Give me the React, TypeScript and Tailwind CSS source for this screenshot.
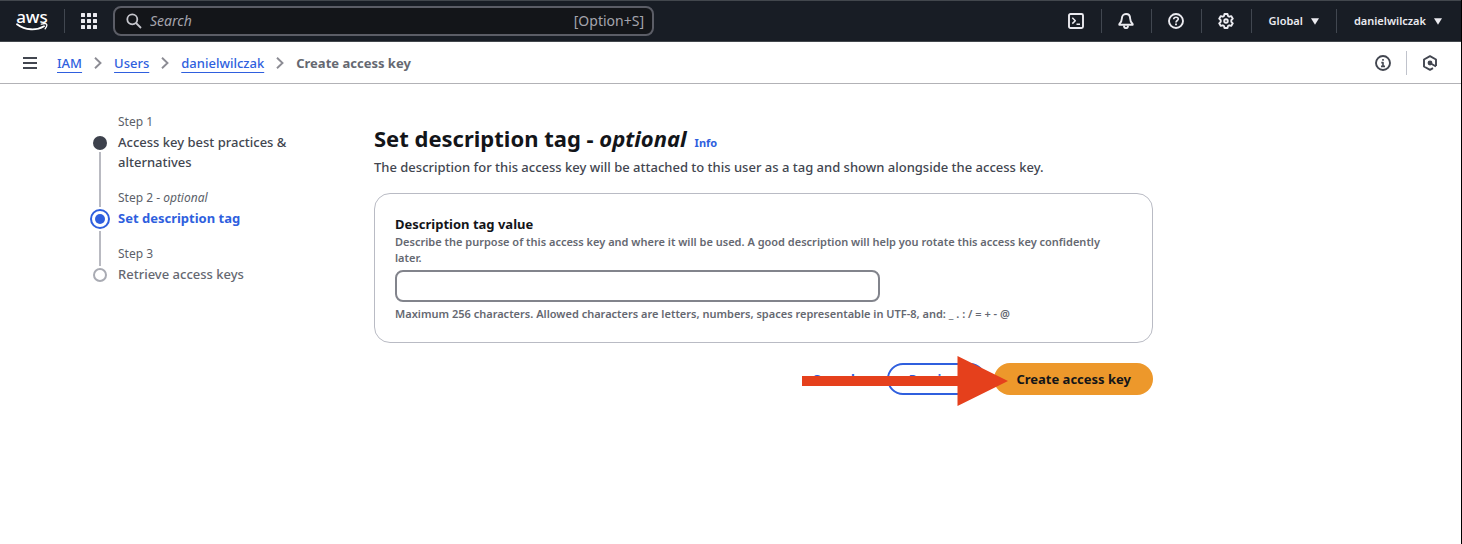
import type { ReactNode } from "react";

function AwsLogo() {
  return (
    <a href="#home" aria-label="AWS home" className="flex h-5 w-8 flex-col items-center text-white">
      <span className="h-3 text-[17px] leading-3 font-medium">aws</span>
      <svg viewBox="0 0 32 8" className="h-2 w-8 shrink-0" fill="none" stroke="currentColor" aria-hidden="true">
        <path d="M1 1.2C9.5 7.6 20.500 7.700 28 3.200" strokeWidth="1.900" strokeLinecap="round" />
        <path d="M25.300 1.200C27.500 .5 29.900 .5 30.500 1.100C31 1.700 30.500 4 29.100 5.800" strokeWidth="1.300" strokeLinecap="round" />
      </svg>
    </a>
  );
}

function AppsIcon() {
  return (
    <svg viewBox="0 0 16 16" className="size-4" fill="currentColor" aria-hidden="true">
      {[0, 6, 12].map((y) =>
        [0, 6, 12].map((x) => <rect key={`${x}-${y}`} x={x} y={y} width="4" height="4" rx=".5" />)
      )}
    </svg>
  );
}

function Icon({ children }: { children: ReactNode }) {
  return (
    <svg
      viewBox="0 0 16 16"
      className="size-4"
      fill="none"
      stroke="currentColor"
      strokeWidth="1.900"
      strokeLinejoin="round"
      aria-hidden="true"
    >
      {children}
    </svg>
  );
}

function TerminalIcon() {
  return (
    <Icon>
      <rect x="1" y="1" width="14" height="14" rx="1.500" />
      <path d="M4.300 4.800 7.300 7.700 4.300 10.600M8.500 11.300H12" strokeWidth="1.500" />
    </Icon>
  );
}

function BellIcon() {
  return (
    <Icon>
      <path d="M8 1C5.300 1 3.900 3 3.900 5.300C3.900 8.300 3 9.400 1.300 11.200V11.800H14.700V11.200C13 9.400 12.100 8.300 12.100 5.300C12.100 3 10.700 1 8 1Z" />
      <path d="M6 12.500C6 14.200 6.800 15.100 8 15.100S10 14.200 10 12.500" />
    </Icon>
  );
}

function HelpIcon() {
  return (
    <Icon>
      <circle cx="8" cy="8" r="7" />
      <path d="M5.700 6.300C5.700 4.900 6.700 4.200 8 4.200S10.300 5 10.300 6.100C10.300 7.500 8 7.600 8 9.500" strokeWidth="1.600" />
      <path d="M8 10.600V12.300" />
    </Icon>
  );
}

function GearIcon() {
  return (
    <Icon>
      <path d="M6.500 1H9.500L10 3L11.200 3.700L13.200 3.100L14.800 5.700L13.300 7.200V8.800L14.800 10.300L13.200 12.900L11.200 12.300L10 13L9.500 15H6.500L6 13L4.800 12.300L2.800 12.900L1.200 10.300L2.700 8.800V7.200L1.200 5.700L2.800 3.100L4.800 3.700L6 3Z" />
      <circle cx="8" cy="8" r="1.800" />
    </Icon>
  );
}

function InfoIcon() {
  return (
    <Icon>
      <circle cx="8" cy="8" r="7" />
      <path d="M8 4V5.700M6.300 7.600H8V11.300M6 11.400H10" strokeWidth="1.600" />
    </Icon>
  );
}

function HexIcon() {
  return (
    <Icon>
      <path d="M14 11V4.500L8 1.200L2 4.500V11.500L8 14.800L11 13.100" />
      <circle cx="8" cy="8" r="2.400" fill="currentColor" stroke="none" />
      <path d="M8 8L14 11.500" />
    </Icon>
  );
}

function Caret() {
  return (
    <svg viewBox="0 0 8 7" className="h-[7px] w-2" fill="currentColor" aria-hidden="true">
      <path d="M0 .3H8L4 6.700Z" />
    </svg>
  );
}

function Divider() {
  return <span className="h-6 w-px bg-[#414750]" />;
}

function TopBar() {
  const tools = [
    { label: "CloudShell", icon: <TerminalIcon /> },
    { label: "Notifications", icon: <BellIcon /> },
    { label: "Help", icon: <HelpIcon /> },
    { label: "Settings", icon: <GearIcon /> },
  ];
  return (
    <header className="flex h-[42px] items-center justify-between border-y border-[#42474d] bg-[#181d25] px-4 text-[#ebebf0]">
      <div className="flex items-center gap-4">
        <AwsLogo />
        <Divider />
        <button type="button" aria-label="Services">
          <AppsIcon />
        </button>
        <label className="flex h-[30px] w-[541px] items-center gap-2 rounded-lg border-2 border-[#5b5d66] bg-[#131519] pr-2 pl-[11px] text-[#a4a4ad]">
          <svg viewBox="0 0 16 16" className="size-4 text-[#c6c6cd]" fill="none" stroke="currentColor" strokeWidth="1.800" aria-hidden="true">
            <circle cx="6.300" cy="6.300" r="5" />
            <path d="M10 10L15 15" />
          </svg>
          <input
            type="search"
            aria-label="Search"
            placeholder="Search"
            className="min-w-0 flex-1 bg-transparent text-sm outline-none placeholder:text-[#a4a4ad] placeholder:italic"
          />
          <span className="text-sm">[Option+S]</span>
        </label>
      </div>
      <div className="flex items-center">
        {tools.map((t) => (
          <div key={t.label} className="flex items-center">
            <button type="button" aria-label={t.label} className="pr-[17px] pl-4">
              {t.icon}
            </button>
            <Divider />
          </div>
        ))}
        <button type="button" className="flex items-center gap-2 px-[17px] text-[11px] leading-4 font-semibold">
          Global <Caret />
        </button>
        <Divider />
        <button type="button" className="flex items-center gap-2 pr-[3px] pl-[17px] text-[11px] leading-4 font-semibold">
          danielwilczak <Caret />
        </button>
      </div>
    </header>
  );
}

function Chevron() {
  return (
    <svg viewBox="0 0 8 12" className="h-3 w-2 text-[#8c8c94]" fill="none" stroke="currentColor" strokeWidth="1.900" aria-hidden="true">
      <path d="M1 .8L6.500 6L1 11.200" />
    </svg>
  );
}

function BreadcrumbBar() {
  return (
    <div className="flex h-[42px] items-center justify-between border-b border-[#b2b2b6] px-[23px] text-[#424650]">
      <div className="flex items-center gap-5">
        <button type="button" aria-label="Open navigation">
          <svg viewBox="0 0 14 12" className="h-3 w-3.5" stroke="currentColor" strokeWidth="2" aria-hidden="true">
            <path d="M0 1H14M0 6H14M0 11H14" />
          </svg>
        </button>
        <nav aria-label="Breadcrumbs">
          <ol className="flex items-center gap-3 text-[13px] leading-5">
            {["IAM", "Users", "danielwilczak"].map((name) => (
              <li key={name} className="flex items-center gap-3">
                <a
                  href={`#${name}`}
                  className="font-medium text-[#2f5fde] underline decoration-1 underline-offset-4"
                >
                  {name}
                </a>
                <Chevron />
              </li>
            ))}
            <li className="font-bold text-[#656871]">Create access key</li>
          </ol>
        </nav>
      </div>
      <div className="flex items-center gap-[15px]">
        <button type="button" aria-label="Info panel">
          <InfoIcon />
        </button>
        <span className="h-6 w-px bg-[#c0c3cc]" />
        <button type="button" aria-label="Diagnostics">
          <HexIcon />
        </button>
      </div>
    </div>
  );
}

function Steps() {
  return (
    <nav aria-label="Steps" className="w-56 shrink-0">
      <ol className="text-[13px] leading-5 text-[#424650]">
        <li className="flex gap-2">
          <div className="flex w-5 flex-col items-center gap-0.5 pt-[22px]">
            <span className="size-3.5 rounded-full bg-[#3d414c]" />
            <span className="w-0.5 flex-1 bg-[#b9bac1]" />
          </div>
          <div className="flex-1 pb-[18px]">
            <p className="mb-0.5 text-xs text-[#5c5f69]">Step 1</p>
            <a href="#step-1" className="block font-medium">
              Access key best practices &amp; alternatives
            </a>
          </div>
        </li>
        <li className="flex gap-2">
          <div className="flex w-5 flex-col items-center gap-0.5">
            <span className="h-[17px] w-0.5 bg-[#b9bac1]" />
            <span className="flex size-5 items-center justify-center rounded-full border-2 border-[#2f5fde]">
              <span className="size-2.5 rounded-full bg-[#2f5fde]" />
            </span>
            <span className="w-0.5 flex-1 bg-[#b9bac1]" />
          </div>
          <div className="flex-1 pb-[18px]">
            <p className="mb-0.5 text-xs text-[#5c5f69]">
              Step 2 - <i>optional</i>
            </p>
            <a href="#step-2" aria-current="step" className="block font-bold text-[#2f5fde]">
              Set description tag
            </a>
          </div>
        </li>
        <li className="flex gap-2">
          <div className="flex w-5 flex-col items-center gap-0.5">
            <span className="h-5 w-0.5 bg-[#b9bac1]" />
            <span className="size-3.5 rounded-full border-2 border-[#a9abb3]" />
          </div>
          <div className="flex-1">
            <p className="mb-0.5 text-xs text-[#5c5f69]">Step 3</p>
            <span className="block font-medium text-[#656871]">Retrieve access keys</span>
          </div>
        </li>
      </ol>
    </nav>
  );
}

function Arrow() {
  return (
    <svg
      viewBox="0 0 206 50"
      className="pointer-events-none absolute -top-[7px] right-[145px] h-[50px] w-[206px] text-[#e5401c]"
      fill="currentColor"
      aria-hidden="true"
    >
      <path d="M0 20H155.500V0L206 25L155.500 50V30H0Z" />
    </svg>
  );
}

function TagForm() {
  return (
    <form className="max-w-[779px] min-w-0 flex-1" onSubmit={(e) => e.preventDefault()}>
      <div className="flex items-baseline gap-2 pt-[9px]">
        <h1 className="text-[22px] leading-[30px] font-bold text-[#131519]">
          Set description tag - <i>optional</i>
        </h1>
        <a href="#info" className="text-[11px] leading-4 font-bold text-[#2f5fde]">
          Info
        </a>
      </div>
      <p className="mt-1 text-[13px] leading-5 font-medium text-[#424650]">
        The description for this access key will be attached to this user as a tag and shown alongside the access key.
      </p>
      <div className="mt-4 rounded-2xl border border-[#b9bbc4] p-5 text-[11px] leading-4 font-semibold text-[#656871]">
        <label htmlFor="tag-value" className="block text-[13px] leading-5 font-bold text-[#131519]">
          Description tag value
        </label>
        <p id="tag-help" className="pr-4">
          Describe the purpose of this access key and where it will be used. A good description will help you rotate
          this access key confidently later.
        </p>
        <input
          id="tag-value"
          type="text"
          maxLength={256}
          aria-describedby="tag-help tag-limits"
          className="my-1 block h-8 w-full max-w-[485px] rounded-lg border-2 border-[#82848c] px-3 text-[13px]"
        />
        <p id="tag-limits">
          Maximum 256 characters. Allowed characters are letters, numbers, spaces representable in UTF-8, and: _ . : / =
          + - @
        </p>
      </div>
      <div className="relative mt-5 flex justify-end gap-2 text-[13px] leading-5 font-bold">
        <button type="button" className="h-8 px-6 text-[#2f5fde]">
          Cancel
        </button>
        <button type="button" className="h-8 rounded-full border-2 border-[#2f5fde] px-5 text-[#2f5fde]">
          Previous
        </button>
        <button type="submit" className="h-8 rounded-full bg-[#ed982b] px-[22px] text-[#131519]">
          Create access key
        </button>
        <Arrow />
      </div>
    </form>
  );
}

export default function App() {
  return (
    <div className="min-h-screen border-r border-black bg-white font-['Noto_Sans','Open_Sans',sans-serif]">
      <TopBar />
      <BreadcrumbBar />
      <main className="flex gap-[60px] py-[30px] pr-6 pl-[90px]">
        <Steps />
        <TagForm />
      </main>
    </div>
  );
}
